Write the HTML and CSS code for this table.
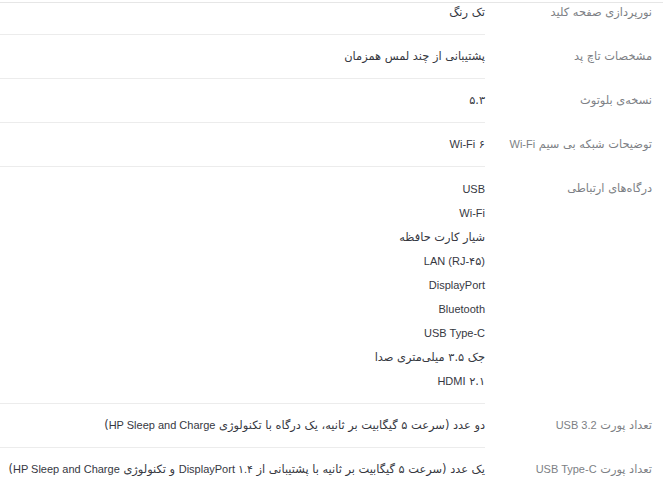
FILE: index.html
```html
<!DOCTYPE html>
<html lang="fa" dir="rtl">
<head>
<meta charset="utf-8">
<title>مشخصات</title>
<link rel="stylesheet" href="styles.css">
</head>
<body>
<div class="top-rule"></div>
<ul class="specs">
  <li class="row first">
    <div class="label">نورپردازی صفحه کلید</div>
    <div class="value"><p>تک رنگ</p></div>
  </li>
  <li class="row">
    <div class="label">مشخصات تاچ پد</div>
    <div class="value"><p>پشتیبانی از چند لمس همزمان</p></div>
  </li>
  <li class="row">
    <div class="label">نسخه‌ی بلوتوث</div>
    <div class="value"><p>۵.۳</p></div>
  </li>
  <li class="row">
    <div class="label">توضیحات شبکه بی سیم <span class="en">Wi-Fi</span></div>
    <div class="value"><p><span class="en">Wi-Fi</span> ۶</p></div>
  </li>
  <li class="row">
    <div class="label">درگاه‌های ارتباطی</div>
    <div class="value list">
      <p class="en">USB</p>
      <p class="en">Wi-Fi</p>
      <p>شیار کارت حافظه</p>
      <p><span class="en">LAN (RJ-</span>۴۵<span class="en">)</span></p>
      <p class="en">DisplayPort</p>
      <p class="en">Bluetooth</p>
      <p class="en">USB Type-C</p>
      <p>جک ۳.۵ میلی‌متری صدا</p>
      <p><span class="en">HDMI</span> ۲.۱</p>
    </div>
  </li>
  <li class="row">
    <div class="label">تعداد پورت <span class="en">USB 3.2</span></div>
    <div class="value"><p>دو عدد (سرعت ۵ گیگابیت بر ثانیه، یک درگاه با تکنولوژی <span class="en">HP Sleep and Charge</span>)</p></div>
  </li>
  <li class="row">
    <div class="label">تعداد پورت <span class="en">USB Type-C</span></div>
    <div class="value"><p>یک عدد (سرعت ۵ گیگابیت بر ثانیه با پشتیبانی از <span class="en" dir="ltr">DisplayPort ۱.۴</span> و تکنولوژی <span class="en">HP Sleep and Charge</span>)</p></div>
  </li>
</ul>
</body>
</html>
```
FILE: styles.css
```css
html, body {
  margin: 0;
  padding: 0;
  background: #ffffff;
}
body {
  font-family: "DejaVu Sans", sans-serif;
  font-size: 11.4px;
  overflow: hidden;
}
.en {
  font-family: "Liberation Sans", "DejaVu Sans", sans-serif;
  font-size: 11px;
}
.top-rule {
  margin-top: 2px;
  height: 1px;
  background: #e6e6e6;
}
.specs {
  list-style: none;
  margin: 0;
  padding: 0;
}
.row {
  display: flex;
  flex-direction: row;
}
.row.first {
  margin-top: -12px;
}
.label {
  flex: 0 0 167px;
  padding: 10px 11px 0 0;
  line-height: 23px;
  color: #7d7f85;
  white-space: nowrap;
}
.value {
  flex: 1 1 auto;
  padding: 10px 0;
  border-bottom: 1px solid #ececec;
  color: #36383f;
  white-space: nowrap;
}
.value p {
  margin: 0;
  line-height: 23px;
}
.value.list p {
  line-height: 24px;
}
```
